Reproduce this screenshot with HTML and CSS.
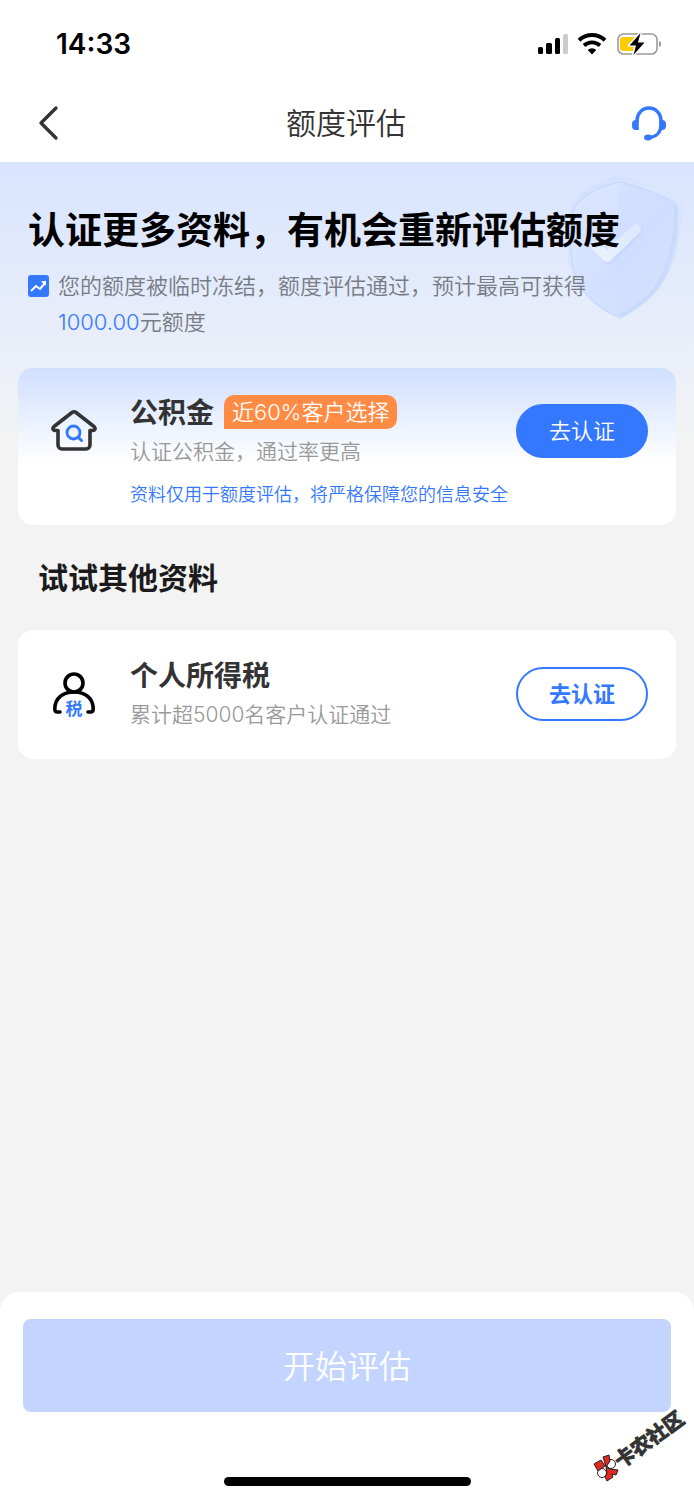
FILE: index.html
```html
<!DOCTYPE html>
<html lang="zh-CN">
<head>
<meta charset="utf-8">
<meta name="viewport" content="width=device-width, initial-scale=1">
<title>额度评估</title>
<link rel="stylesheet" href="styles.css">
</head>
<body>
<div class="app">
  <div class="status">
    <time class="clock">14:33</time>
    <div class="indicators">
      <svg width="30" height="20" viewBox="0 0 30 20" aria-hidden="true">
        <rect x="0" y="13" width="5" height="7" rx="1.5"/>
        <rect x="8" y="9" width="6" height="11" rx="1.5"/>
        <rect x="17" y="4" width="5" height="16" rx="1.5"/>
        <rect x="25" y="0" width="5" height="20" rx="1.5" fill="#ccc"/>
      </svg>
      <svg width="30" height="22" viewBox="0 0 30 22" fill="none" stroke="#000" aria-hidden="true">
        <path d="M2 7.2a19 19 0 0 1 26 0" stroke-width="4"/>
        <path d="M7 12.5a12 12 0 0 1 16 0" stroke-width="3.8"/>
        <path d="M10.700 17a6.500 6.500 0 0 1 8.600 0L15 21.500z" fill="#000" stroke="none"/>
      </svg>
      <svg width="46" height="24" viewBox="0 0 46 24" aria-hidden="true">
        <rect x="2" y="2" width="39" height="20" rx="5.500" fill="#fff" stroke="#9b9b9b" stroke-width="1.600"/>
        <path d="M7 5h14v14H7a3 3 0 0 1-3-3V8a3 3 0 0 1 3-3z" fill="#fc0"/>
        <path d="M43 9c3 1 3 5 0 6z" fill="#9b9b9b"/>
        <path d="M24.500 1 13.500 13.500h6.500l-2.500 9.500L28.500 10.500H22z" fill="#000" stroke="#fff" stroke-width="3" paint-order="stroke" stroke-linejoin="round"/>
      </svg>
    </div>
  </div>

  <header class="nav">
    <button class="icon-button" type="button" aria-label="返回">
      <svg width="22" height="36" viewBox="0 0 22 36" fill="none" stroke="#333" stroke-width="3.400" stroke-linecap="round" stroke-linejoin="round"><path d="M18 3 3 18l15 15"/></svg>
    </button>
    <h1 class="nav-title">额度评估</h1>
    <button class="icon-button" type="button" aria-label="客服">
      <svg width="34" height="36" viewBox="0 0 34 36" fill="none" stroke="#3478ff" stroke-width="3.400" stroke-linecap="round">
        <path d="M5 17v-1.500a12 12.500 0 0 1 24 0V20c0 7-4.500 12-12 12.700"/>
        <path d="M6.800 15v10H4a4 4 0 0 1-4-4v-2a4 4 0 0 1 4-4zM27.300 15H30a4 4 0 0 1 4 4v2a4 4 0 0 1-4 4h-2.700z" fill="#3478ff" stroke="none"/>
        <ellipse cx="16" cy="32.500" rx="4" ry="3" fill="#3478ff" stroke="none"/>
      </svg>
    </button>
  </header>

  <main class="content">
    <svg class="shield" width="154" height="178" viewBox="0 0 154 178" aria-hidden="true">
      <defs>
        <linearGradient id="face" x1="0" y1="0" x2="1" y2="1"><stop offset="0" stop-color="#dce8ff"/><stop offset=".55" stop-color="#d2dfff"/><stop offset="1" stop-color="#dde7fb"/></linearGradient>
        <linearGradient id="edge" x1="0" y1="0" x2="1" y2="1"><stop offset="0" stop-color="#c9d9fc"/><stop offset=".5" stop-color="#dce7ff"/><stop offset="1" stop-color="#c3d4fb"/></linearGradient>
        <linearGradient id="tick" x1="0" y1="1" x2="1" y2="0"><stop offset="0" stop-color="#eaf1ff"/><stop offset="1" stop-color="#dde8ff"/></linearGradient>
      </defs>
      <path d="M32 42Q52 19 79 14q28 5 65 27-3 30-9 54c-12 34-31 51-55 62q-37-15-51-52-5-35 3-63z" fill="url(#edge)" opacity=".6"/>
      <path d="M35 44Q54 24 80 20q24 5 50 18 7 1 6 10-1 32-11 57c-8 23-23 38-46 50-27-11-40-26-47-53q-4-34 3-58z" fill="url(#face)" stroke="#c5d6fb" stroke-width="1"/>
      <path d="M80 20q24 5 50 18 7 1 6 10-1 32-11 57-13 30-46 50-8-28 1-135" fill="#c9d9ff" opacity=".25"/>
      <path d="M136 44q2 33-9 63c-9 22-24 34-46 47" fill="none" stroke="#c4d5fc" stroke-width="4" opacity=".6"/>
      <path d="m58 86 11 11 29-29" fill="none" stroke="#bfcffa" stroke-width="11" stroke-linecap="round" stroke-linejoin="round" opacity=".35"/>
      <path d="m56 84 11 11 29-28" fill="none" stroke="url(#tick)" stroke-width="10" stroke-linecap="round" stroke-linejoin="round"/>
    </svg>

    <section class="intro">
      <h2 class="headline">认证更多资料，有机会重新评估额度</h2>
      <div class="notice">
        <svg class="notice-icon" width="22" height="22" viewBox="0 0 22 22" fill="none" aria-hidden="true">
          <rect width="21" height="22" rx="3" fill="#3478ff"/>
          <path d="m3 16 5-5 4 3 5-6" stroke="#fff" stroke-width="2"/>
          <path d="m13 6.500 5-.8-.3 5z" fill="#fff"/>
        </svg>
        <p class="notice-text">您的额度被临时冻结，额度评估通过，预计最高可获得<span class="amount">1000.00</span>元额度</p>
      </div>
    </section>

    <article class="card card-featured">
      <svg class="card-icon" width="46" height="46" viewBox="0 0 46 46" fill="none" stroke-linecap="round" stroke-linejoin="round" aria-hidden="true">
        <path d="M21 4.500 3 18.500c-2 2-1 4 1.500 4H7V37a4 4 0 0 0 4 4h24a4 4 0 0 0 4-4V22.500h2.500c2.500 0 3.500-2 1.500-4L25 4.500q-2-1.500-4 0" stroke="#333" stroke-width="3.600"/>
        <circle cx="22.500" cy="24.500" r="6.500" stroke="#3478ff" stroke-width="2.800"/>
        <path d="m27.500 29.500 3 3" stroke="#3478ff" stroke-width="3"/>
      </svg>
      <div class="card-body">
        <div class="card-heading">
          <h3 class="card-title">公积金</h3>
          <span class="badge">近60%客户选择</span>
        </div>
        <p class="card-text">认证公积金，通过率更高</p>
      </div>
      <button class="pill pill-solid" type="button">去认证</button>
      <p class="card-note">资料仅用于额度评估，将严格保障您的信息安全</p>
    </article>

    <h2 class="section-title">试试其他资料</h2>

    <article class="card">
      <svg class="card-icon" width="46" height="54" viewBox="0 -4 46 54" fill="none" stroke="#000" stroke-width="3.600" stroke-linecap="round" aria-hidden="true">
        <circle cx="23" cy="12" r="9"/>
        <path d="M9 41H6.500c-2 0-2.700-1-2.700-3C3.800 27 12 21 23 21s19.200 6 19.200 17c0 2-.7 3-2.700 3H37"/>
        <text class="icon-char" x="23" y="44" text-anchor="middle">税</text>
      </svg>
      <div class="card-body">
        <h3 class="card-title">个人所得税</h3>
        <p class="card-text">累计超5000名客户认证通过</p>
      </div>
      <button class="pill" type="button">去认证</button>
    </article>
  </main>

  <footer class="footer">
    <button class="start" type="button" disabled>开始评估</button>
    <div class="home-bar"></div>
    <svg class="watermark" width="118" height="106" viewBox="0 -20 118 106" role="img" aria-label="卡农社区">
      <g stroke="#222" stroke-width="1">
        <circle cx="35" cy="57" r="4.500" fill="#fff"/>
        <circle cx="26" cy="66" r="4.500" fill="#fff"/>
        <path d="m18 57 7-4 4 6-7 5z" fill="#df291f"/>
        <path d="m27 50 6-2 1 6-4 6z" fill="#df291f"/>
        <path d="m30 60 4 2 8 1-2 5-4-1 1 3-6 4-2-4 2-4z" fill="#df291f"/>
      </g>
      <text class="watermark-text" transform="translate(45 62) rotate(-36)">卡农社区</text>
    </svg>
  </footer>
</div>
</body>
</html>
```
FILE: styles.css
```css
* {
  box-sizing: border-box;
}

body {
  margin: 0;
  background: #f3f3f3;
  color: #333;
  font-family: Inter, "Noto Sans CJK SC", sans-serif;
  font-weight: 350;
}

h1, h2, h3, p {
  margin: 0;
}

h2, h3 {
  font-weight: 700;
}

button {
  padding: 0 0 4px;
  font-family: inherit;
  font-weight: inherit;
  cursor: pointer;
}

svg {
  display: block;
  flex: none;
}

.app {
  display: flex;
  flex-direction: column;
  min-height: 100vh;
}

.status {
  display: flex;
  align-items: center;
  justify-content: space-between;
  height: 88px;
  padding: 0 32px 0 56px;
  background: #fff;
  color: #000;
}

.clock {
  font-size: 28px;
  font-weight: 600;
}

.indicators {
  display: flex;
  align-items: center;
  gap: 9px;
}

.nav {
  display: flex;
  align-items: center;
  justify-content: space-between;
  height: 74px;
  padding: 0 28px 4px 38px;
  background: #fff;
}

.icon-button {
  display: flex;
  justify-content: center;
  padding: 0;
  border: 0;
  background: none;
}

.nav-title {
  padding-bottom: 4px;
  font-size: 30px;
  font-weight: inherit;
}

.content {
  position: relative;
  flex: 1;
  padding: 0 18px 32px;
  background: linear-gradient(#d8e4ff 0, #e9eef9 180px, #f3f3f3 280px);
}

.shield {
  position: absolute;
  top: 0;
  right: 0;
}

.intro {
  position: relative;
  padding: 42px 10px 28px;
}

.headline {
  color: #000;
  font-size: 37px;
  line-height: 54px;
}

.notice {
  display: flex;
  gap: 8px;
  margin-top: 10px;
}

.notice-icon {
  margin-top: 7px;
}

.notice-text {
  max-width: 544px;
  color: #777b84;
  font-size: 22px;
  line-height: 36px;
}

.amount {
  color: #3478ff;
}

.card {
  position: relative;
  display: grid;
  grid-template-columns: 46px 1fr auto;
  column-gap: 33px;
  align-items: center;
  padding: 25px 28px 27px 33px;
  border-radius: 15px;
  background: #fff;
}

.card-featured {
  padding-top: 24px;
  padding-bottom: 16px;
  background: linear-gradient(#d0dfff, #fff 96px);
}

.card-heading {
  display: flex;
  align-items: center;
  gap: 10px;
}

.card-title {
  font-size: 28px;
  line-height: 42px;
}

.badge {
  margin-bottom: 2px;
  padding: 0 8px;
  border-radius: 10px 10px 10px 0;
  background: #ff8b45;
  color: #fff;
  font-size: 22px;
  line-height: 34px;
}

.card-text {
  color: #999;
  font-size: 21px;
  line-height: 35px;
}

.card-note {
  grid-column: 2 / -1;
  margin-top: 12px;
  color: #3478ff;
  font-size: 18px;
  line-height: 28px;
}

.pill {
  width: 132px;
  height: 54px;
  border: 2px solid #3478ff;
  border-radius: 27px;
  background: #fff;
  color: #3478ff;
  font-size: 22px;
  font-weight: 700;
}

.pill-solid {
  background: #3478ff;
  color: #fff;
  font-weight: inherit;
}

.section-title {
  padding: 31px 20px 29px;
  color: #1b1b1d;
  font-size: 30px;
  line-height: 45px;
}

.icon-char {
  fill: #3478ff;
  stroke: none;
  font-size: 17px;
  font-weight: 700;
}

.footer {
  position: relative;
  padding: 27px 23px 14px;
  border-radius: 20px 20px 0 0;
  background: #fff;
}

.start {
  display: block;
  width: 100%;
  height: 93px;
  border: 0;
  border-radius: 8px;
  background: #c3d5ff;
  color: #fff;
  font-size: 32px;
}

.home-bar {
  width: 247px;
  height: 9px;
  margin: 65px auto 0;
  border-radius: 5px;
  background: #000;
}

.watermark {
  position: absolute;
  right: 0;
  bottom: 7px;
}

.watermark-text {
  fill: #333;
  stroke: #333;
  stroke-width: 1px;
  font-size: 20px;
  font-weight: 700;
}
```
